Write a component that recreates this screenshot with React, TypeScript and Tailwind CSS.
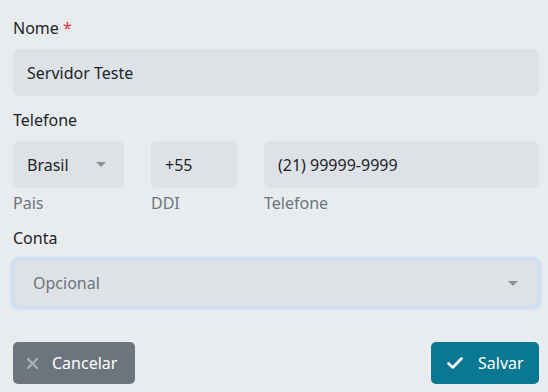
import React from 'react';

const font = { fontFamily: '"Segoe UI", "Noto Sans", "Open Sans", sans-serif' };

const Caret: React.FC = () => (
  <svg width="10" height="5" viewBox="0 0 10 5" className="shrink-0">
    <path d="M0 0 L10 0 L5 5 Z" fill="#8c9196" />
  </svg>
);

const App: React.FC = () => {
  return (
    <div className="w-[548px] h-[392px] bg-[#e9ecef] text-[#212529] text-[16px] leading-6 pl-[13px] pr-[9px] pt-[16px]" style={font}>
      <label className="block">
        Nome <span className="text-[#dc3545]">*</span>
      </label>
      <div className="mt-[9px] h-[47px] rounded-[6px] bg-[#dee2e6] px-[14px] flex items-center">
        Servidor Teste
      </div>

      <label className="block mt-[12px]">Telefone</label>
      <div className="mt-[9px] flex gap-[27px]">
        <div className="w-[111px]">
          <div className="h-[47px] rounded-[6px] bg-[#dee2e6] pl-[14px] pr-[18px] flex items-center justify-between">
            <span>Brasil</span>
            <Caret />
          </div>
          <div className="mt-[3px] text-[#6c757d]">Pais</div>
        </div>
        <div className="w-[86px]">
          <div className="h-[47px] rounded-[6px] bg-[#dee2e6] px-[14px] flex items-center">+55</div>
          <div className="mt-[3px] text-[#6c757d]">DDI</div>
        </div>
        <div className="flex-1">
          <div className="h-[47px] rounded-[6px] bg-[#dee2e6] px-[14px] flex items-center">(21) 99999-9999</div>
          <div className="mt-[3px] text-[#6c757d]">Telefone</div>
        </div>
      </div>

      <label className="block mt-[11px]">Conta</label>
      <div className="mt-[9px] h-[48px] rounded-[6px] bg-[#dee2e6] border border-[#c6d8ee] ring-[3px] ring-[#d3e2f4] pl-[19px] pr-[20px] flex items-center justify-between text-[#6c757d]">
        <span>Opcional</span>
        <Caret />
      </div>

      <div className="mt-[35px] flex justify-between">
        <button className="h-[42px] w-[122px] rounded-[5px] bg-[#6c757d] text-white flex items-center pl-[14px] gap-[14px]">
          <svg width="11" height="11" viewBox="0 0 11 11">
            <path d="M1 1 L10 10 M10 1 L1 10" stroke="#adb2b8" strokeWidth="2.2" strokeLinecap="round" />
          </svg>
          <span>Cancelar</span>
        </button>
        <button className="h-[42px] w-[108px] rounded-[5px] bg-[#0b7891] text-white flex items-center pl-[16px] gap-[15px]">
          <svg width="16" height="12" viewBox="0 0 16 12">
            <path d="M1.5 6.5 L5.8 10.5 L14.5 1.5" stroke="#fff" strokeWidth="2.6" fill="none" strokeLinecap="round" strokeLinejoin="round" />
          </svg>
          <span>Salvar</span>
        </button>
      </div>
    </div>
  );
};

export default App;
